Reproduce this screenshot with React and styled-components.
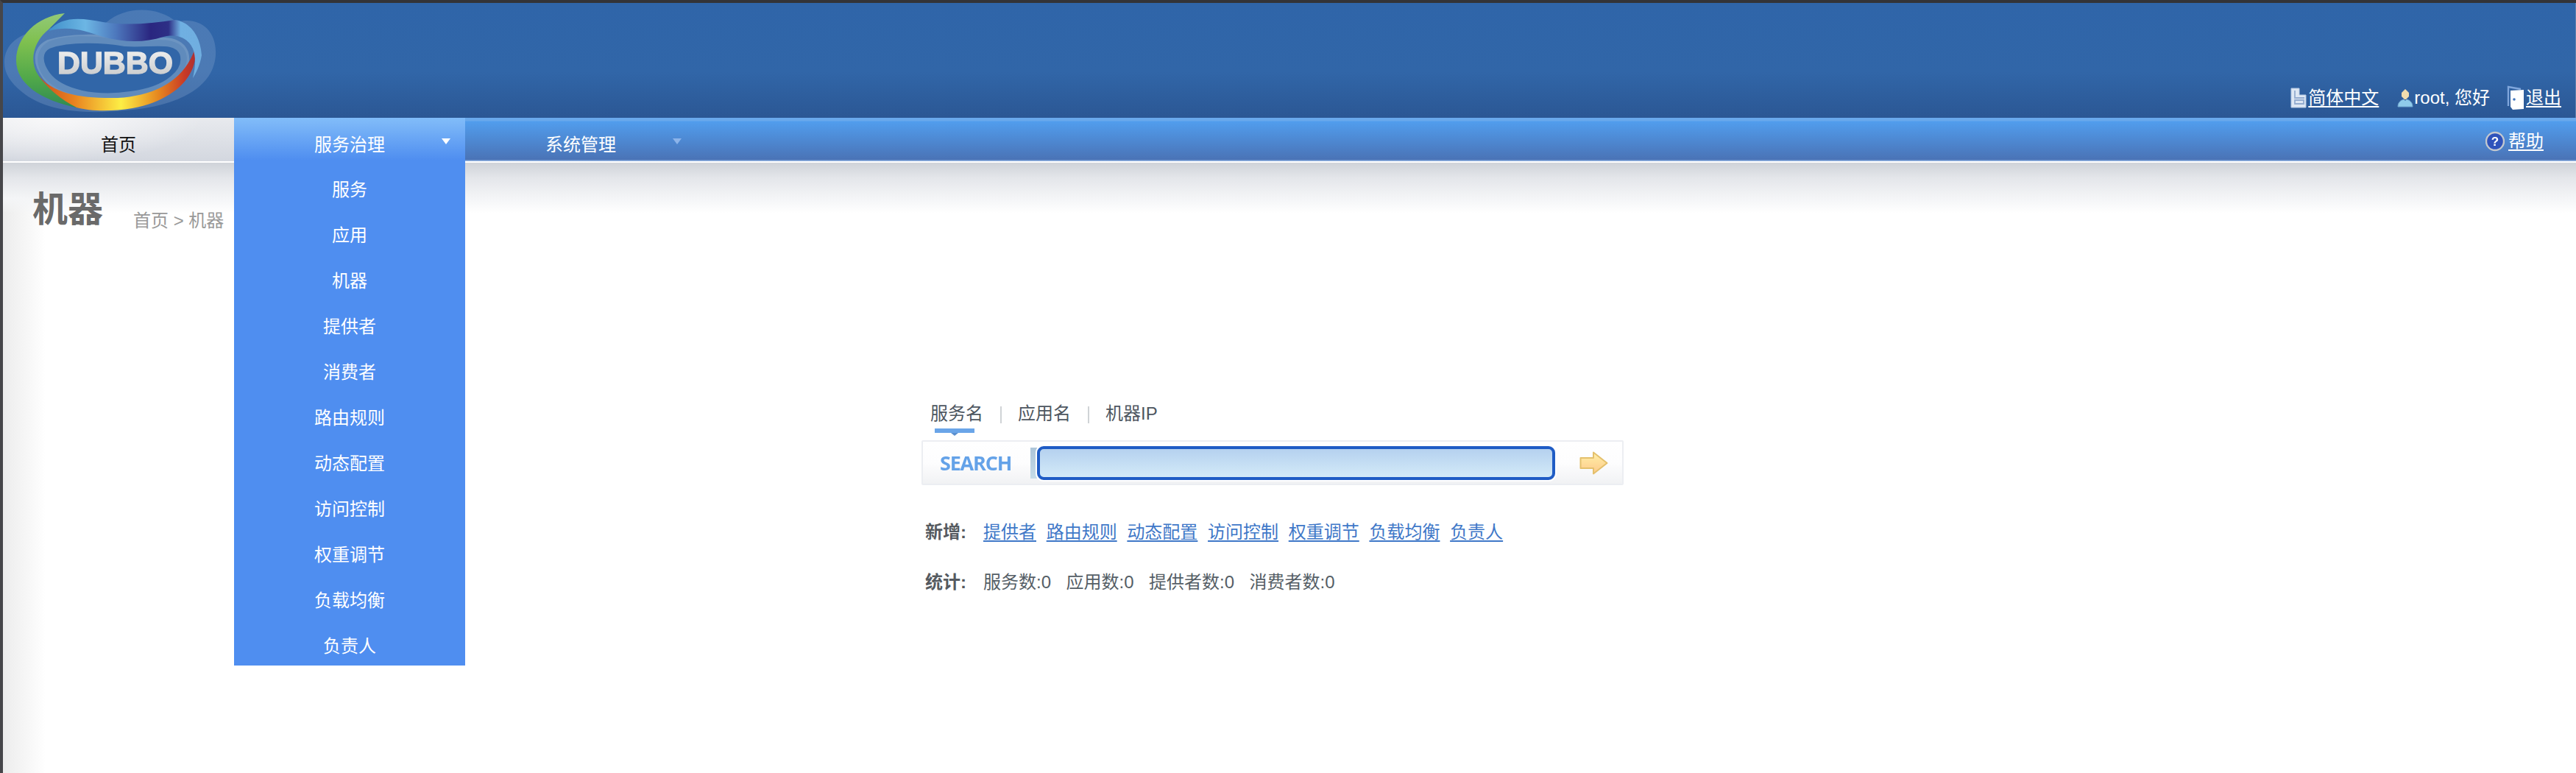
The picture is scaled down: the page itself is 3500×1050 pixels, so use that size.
import React from "react";
import styled, { createGlobalStyle } from "styled-components";

const Global = createGlobalStyle`
  html, body { margin: 0; padding: 0; background: #fff; }
  body { font-family: "Liberation Sans", "Noto Sans CJK SC", sans-serif; }
`;

const Page = styled.div`
  box-sizing: border-box;
  width: 3500px;
  height: 1050px;
  border-left: 4px solid #46464a;
  border-top: 4px solid #333438;
  display: flex;
  flex-direction: column;
  overflow: hidden;
  background: #fff;
`;

const Header = styled.header`
  box-sizing: border-box;
  height: 156px;
  display: flex;
  align-items: flex-start;
  justify-content: space-between;
  background: linear-gradient(#2f65a9 0%, #3166a8 60%, #2b5794 100%);
  border-right: 1px solid #5f81ad;
`;

const LogoSvg = styled.svg`
  display: block;
  filter: blur(0.7px);
`;

const UserBar = styled.div`
  display: flex;
  align-items: center;
  height: 36px;
  margin-top: 111px;
  padding-right: 19px;
  color: #fff;
  font-size: 24px;
`;

const UserItem = styled.span`
  display: flex;
  align-items: center;
  margin-left: ${(p) => p.$gap || 0}px;
`;

const TopLink = styled.a`
  color: #fff;
  text-decoration: underline;
  text-underline-offset: 3px;
  line-height: 30px;
  margin-left: 2px;
`;

const Greeting = styled.span`
  line-height: 30px;
  margin-left: 1px;
`;

const IconSvg = styled.svg`
  display: block;
  flex: none;
  filter: blur(0.5px);
`;

const NavBar = styled.nav`
  box-sizing: border-box;
  height: 61px;
  display: flex;
  border-bottom: 2px solid #fff;
  background: linear-gradient(#6aa9ec 0, #6aa9ec 4px, #519ded 5px, #4a73b6 57px, #8fb0de 58px);
  position: relative;
  z-index: 2;
`;

const navBg = {
  home: "radial-gradient(ellipse 200px 60px at 70px 0, #f8f8f9, rgba(246,247,248,0)), linear-gradient(#e8eaee, #d3d7df)",
  open: "linear-gradient(#80bcf9 0, #7db8f8 6px, #4f8ef0 57px)",
  idle: "transparent",
};

const NavItem = styled.div`
  position: relative;
  width: 314px;
  height: 59px;
  box-sizing: border-box;
  padding-top: 9px;
  display: flex;
  align-items: center;
  justify-content: center;
  font-size: 24px;
  color: ${(p) => (p.$kind === "home" ? "#111" : "#fff")};
  background: ${(p) => navBg[p.$kind]};
`;

const Caret = styled.i`
  position: absolute;
  top: 28px;
  right: 20px;
  width: 0;
  height: 0;
  border-left: 6px solid transparent;
  border-right: 6px solid transparent;
  border-top: 8px solid ${(p) => (p.$dim ? "#8db4ea" : "#fff")};
  filter: blur(0.4px);
`;

const Dropdown = styled.div`
  position: absolute;
  left: 0;
  top: 59px;
  width: 314px;
  padding-top: 3px;
  background: #4f8ef0;
`;

const DropItem = styled.a`
  box-sizing: border-box;
  display: flex;
  align-items: center;
  justify-content: center;
  height: 62px;
  padding-top: 4px;
  color: #fff;
  font-size: 24px;
`;

const HelpBox = styled.div`
  margin-left: auto;
  padding: 4px 44px 0 0;
  height: 55px;
  display: flex;
  align-items: center;
  color: #fff;
  font-size: 24px;
`;

const HelpLink = styled(TopLink)`
  margin-left: 5px;
`;

const Content = styled.main`
  flex: 1;
  display: flex;
  flex-direction: column;
  padding-top: 34px;
  background:
    linear-gradient(#cfd3d9 0, #e4e6ea 30%, #f4f5f7 70%, rgba(255,255,255,0) 100%) top / 100% 69px no-repeat,
    linear-gradient(90deg, #ececec, #fff) left / 58px 100% no-repeat,
    #fff;
`;

const TitleRow = styled.div`
  display: flex;
  align-items: flex-start;
  padding-left: 40px;
`;

const Title = styled.h1`
  margin: 0;
  font-size: 48px;
  line-height: 60px;
  font-weight: 700;
  color: #6a6a6a;
`;

const Crumb = styled.div`
  margin: 30px 0 0 41px;
  font-size: 24px;
  line-height: 30px;
  color: #999;
`;

const SearchPanel = styled.section`
  width: 954px;
  margin: 230px 0 0 1248px;
`;

const Tabs = styled.div`
  display: flex;
  align-items: flex-start;
  height: 53px;
  padding-left: 12px;
`;

const Tab = styled.span`
  position: relative;
  font-size: 24px;
  line-height: 34px;
  color: #4d5660;
`;

const Indicator = styled.i`
  position: absolute;
  left: 6px;
  top: 37px;
  width: 54px;
  height: 6px;
  background: #6aa5e8;
  &::after {
    content: "";
    position: absolute;
    left: 22px;
    top: 6px;
    border-left: 5px solid transparent;
    border-right: 5px solid transparent;
    border-top: 4px solid #5a8fce;
  }
`;

const TabSep = styled.i`
  width: 2px;
  height: 23px;
  margin: 7px 22.5px 0;
  background: #d0d3d6;
`;

const SearchBox = styled.form`
  box-sizing: border-box;
  height: 61px;
  margin: 0;
  display: flex;
  align-items: center;
  border: 2px solid #eceef2;
  border-radius: 2px;
  background: linear-gradient(#fff, #fdfdfe 50%, #f1f2f4);
`;

const SearchLabel = styled.span`
  box-sizing: border-box;
  width: 146px;
  padding-left: 23px;
  font-family: "Open Sans", sans-serif;
  font-weight: 700;
  font-size: 27px;
  letter-spacing: -1.2px;
  color: #64a2e8;
  filter: blur(0.5px);
`;

const SearchBar = styled.i`
  width: 9px;
  height: 42px;
  background: linear-gradient(#adc5d9, #c6dce8);
`;

const SearchInput = styled.input`
  box-sizing: border-box;
  width: 704px;
  height: 46px;
  padding: 0 10px;
  margin: 0;
  border: 4px solid #1f5cc5;
  border-radius: 9px;
  background: linear-gradient(#b5d1ef, #d3eaf8);
  box-shadow: 0 0 0 2px #fff;
  outline: none;
`;

const GoButton = styled.button`
  border: 0;
  padding: 0;
  margin-left: 33px;
  background: none;
`;

const InfoRow = styled.div`
  display: flex;
  align-items: center;
  height: 34px;
  margin: ${(p) => p.$top}px 0 0 5px;
  font-size: 24px;
  color: #555e66;
`;

const InfoLabel = styled.b`
  width: 79px;
  color: #555a60;
  font-weight: 700;
`;

const InfoList = styled.div`
  display: flex;
  gap: ${(p) => p.$gap}px;
`;

const AddLink = styled.a`
  color: #3f78c8;
  text-decoration: underline;
  text-underline-offset: 3px;
`;

const Logo = () => (
  <LogoSvg width="300" height="156" viewBox="4 4 300 156">
    <defs>
      <linearGradient id="gr" x1="0" y1="0" x2="0" y2="1">
        <stop offset="0" stopColor="#93c978" />
        <stop offset="0.3" stopColor="#7fc04f" />
        <stop offset="0.7" stopColor="#4fa74a" />
        <stop offset="1" stopColor="#2f8a52" />
      </linearGradient>
      <linearGradient id="or" gradientUnits="userSpaceOnUse" x1="52" y1="0" x2="268" y2="0">
        <stop offset="0" stopColor="#c94c1e" />
        <stop offset="0.22" stopColor="#e8811f" />
        <stop offset="0.52" stopColor="#fdee45" />
        <stop offset="0.76" stopColor="#e5851f" />
        <stop offset="0.92" stopColor="#c83a26" />
        <stop offset="1" stopColor="#a82f35" />
      </linearGradient>
      <linearGradient id="bl" gradientUnits="userSpaceOnUse" x1="65" y1="0" x2="270" y2="0">
        <stop offset="0" stopColor="#3f8fc9" />
        <stop offset="0.25" stopColor="#6cb6e4" />
        <stop offset="0.45" stopColor="#4d78bd" />
        <stop offset="0.68" stopColor="#2a2680" />
        <stop offset="0.8" stopColor="#2d2f86" />
        <stop offset="0.88" stopColor="#6fb0e2" />
        <stop offset="1" stopColor="#70aee0" />
      </linearGradient>
      <linearGradient id="tx" x1="0" y1="0" x2="0" y2="1">
        <stop offset="0" stopColor="#f4f4f4" />
        <stop offset="1" stopColor="#c4c6c8" />
      </linearGradient>
    </defs>
    <path d="M6 85C6 60 25 45 60 40C100 30 130 40 145 30C170 8 215 8 240 30C270 22 295 40 293 75C290 120 240 145 170 150C110 156 60 150 30 125C14 112 6 100 6 85Z" fill="#8aa9cf" fillOpacity="0.3" />
    <path d="M70 55C100 45 140 50 170 55C200 58 240 45 252 70C262 95 230 125 180 132C130 140 80 130 60 105C45 85 50 62 70 55Z" fill="#3166a8" />
    <path d="M66 60C95 50 140 52 170 57C205 60 240 48 250 72C258 98 228 124 178 130C130 137 82 128 63 103C50 85 50 68 66 60Z" fill="none" stroke="#86a9cc" strokeOpacity="0.55" strokeWidth="12" />
    <path d="M88 18C50 22 22 50 22 82C22 112 52 136 108 147C84 134 62 118 52 102C40 84 44 58 66 40Z" fill="url(#gr)" />
    <path d="M52 102C72 128 112 134 160 133C210 130 250 110 265 66C270 100 240 136 180 147C150 152 122 151 104 146C84 136 64 120 52 102Z" fill="url(#or)" />
    <path d="M66 42C84 22 108 24 140 30C172 35 205 32 238 27C258 30 272 48 274 75C272 88 266 100 262 106C266 90 266 76 262 66C254 50 240 46 222 50C196 58 170 58 140 50C116 42 94 34 66 42Z" fill="url(#bl)" />
    <text x="78" y="100" fontFamily="Liberation Sans, sans-serif" fontWeight="700" fontSize="42" textLength="157" lengthAdjust="spacingAndGlyphs" fill="url(#tx)" stroke="url(#tx)" strokeWidth="1.4">DUBBO</text>
  </LogoSvg>
);

const DocIcon = () => (
  <IconSvg width="22" height="28" viewBox="0 0 22 28">
    <path d="M1 1H12V10H21V27H1Z" fill="#dde7f4" stroke="#b4c8e2" />
    <path d="M6 4V14H19M6 17H18V22H6Z" fill="none" stroke="#93acd0" strokeWidth="1.8" />
  </IconSvg>
);

const UserIcon = () => (
  <IconSvg width="22" height="26" viewBox="0 0 22 26">
    <path d="M11 1L16 6V11L12 15H10L6 11V6Z" fill="#f0dcae" />
    <path d="M1 25C1 19 5 16 9 15L11 17L13 15C17 16 21 19 21 25Z" fill="#8fcbea" stroke="#6fa4cf" />
  </IconSvg>
);

const DoorIcon = () => (
  <IconSvg width="24" height="34" viewBox="0 0 24 34">
    <path d="M2 28V2L19 5" fill="none" stroke="#7fa6dc" strokeWidth="2.4" />
    <path d="M5 7L23 6V32L8 33L5 29Z" fill="#fff" />
    <circle cx="10" cy="19" r="1.8" fill="#3f74bb" />
  </IconSvg>
);

const HelpIcon = () => (
  <IconSvg width="26" height="28" viewBox="0 0 26 28">
    <circle cx="13" cy="14" r="12" fill="#2f53bb" stroke="#c3c8cf" strokeWidth="2.4" />
    <text x="13" y="20" textAnchor="middle" fontFamily="Liberation Sans, sans-serif" fontWeight="700" fontSize="17" fill="#fff">?</text>
  </IconSvg>
);

const ArrowIcon = () => (
  <IconSvg width="39" height="32" viewBox="0 0 39 32">
    <defs>
      <linearGradient id="ar" x1="0" y1="0" x2="0" y2="1">
        <stop offset="0" stopColor="#fff0a8" />
        <stop offset="1" stopColor="#fdc98a" />
      </linearGradient>
    </defs>
    <path d="M1.5 9H19V1.5L37.5 16L19 30.5V23H1.5Z" fill="url(#ar)" stroke="#e4c06c" strokeWidth="2" strokeLinejoin="round" />
  </IconSvg>
);

const menu = ["服务", "应用", "机器", "提供者", "消费者", "路由规则", "动态配置", "访问控制", "权重调节", "负载均衡", "负责人"];
const adds = ["提供者", "路由规则", "动态配置", "访问控制", "权重调节", "负载均衡", "负责人"];
const stats = ["服务数:0", "应用数:0", "提供者数:0", "消费者数:0"];

export default function App() {
  return (
    <Page>
      <Global />
      <Header>
        <Logo />
        <UserBar>
          <UserItem>
            <DocIcon />
            <TopLink>简体中文</TopLink>
          </UserItem>
          <UserItem $gap={25}>
            <UserIcon />
            <Greeting>root, 您好</Greeting>
          </UserItem>
          <UserItem $gap={23}>
            <DoorIcon />
            <TopLink>退出</TopLink>
          </UserItem>
        </UserBar>
      </Header>
      <NavBar>
        <NavItem $kind="home">首页</NavItem>
        <NavItem $kind="open">
          服务治理
          <Caret />
          <Dropdown>
            {menu.map((m) => (
              <DropItem key={m}>{m}</DropItem>
            ))}
          </Dropdown>
        </NavItem>
        <NavItem $kind="idle">
          系统管理
          <Caret $dim />
        </NavItem>
        <HelpBox>
          <HelpIcon />
          <HelpLink>帮助</HelpLink>
        </HelpBox>
      </NavBar>
      <Content>
        <TitleRow>
          <Title>机器</Title>
          <Crumb>首页 &gt; 机器</Crumb>
        </TitleRow>
        <SearchPanel>
          <Tabs>
            <Tab>
              服务名
              <Indicator />
            </Tab>
            <TabSep />
            <Tab>应用名</Tab>
            <TabSep />
            <Tab>机器IP</Tab>
          </Tabs>
          <SearchBox>
            <SearchLabel>SEARCH</SearchLabel>
            <SearchBar />
            <SearchInput />
            <GoButton type="button">
              <ArrowIcon />
            </GoButton>
          </SearchBox>
          <InfoRow $top={44}>
            <InfoLabel>新增:</InfoLabel>
            <InfoList $gap={13.7}>
              {adds.map((a) => (
                <AddLink key={a}>{a}</AddLink>
              ))}
            </InfoList>
          </InfoRow>
          <InfoRow $top={34}>
            <InfoLabel>统计:</InfoLabel>
            <InfoList $gap={20.5}>
              {stats.map((s) => (
                <span key={s}>{s}</span>
              ))}
            </InfoList>
          </InfoRow>
        </SearchPanel>
      </Content>
    </Page>
  );
}
